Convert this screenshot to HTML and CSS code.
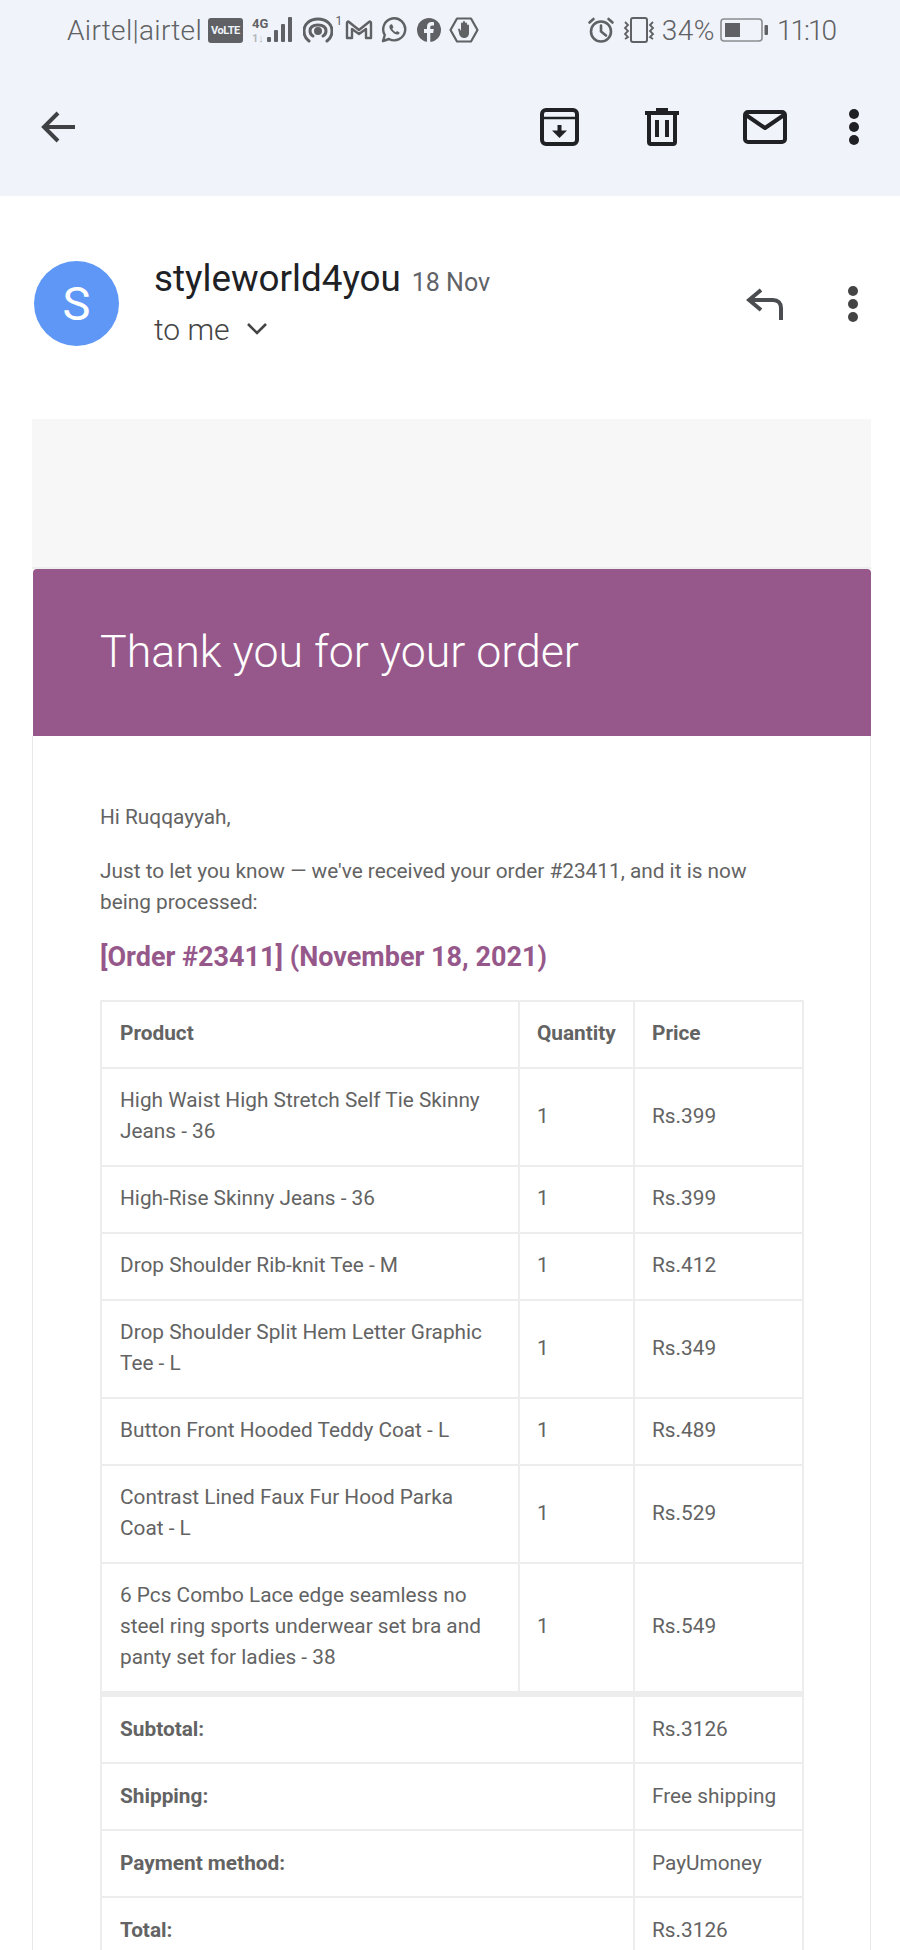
FILE: index.html
```html
<!DOCTYPE html>
<html lang="en">
<head>
<meta charset="utf-8">
<title>Thank you for your order</title>
<link rel="stylesheet" href="styles.css">
</head>
<body>
<div class="screen">
  <header class="topbar">
    <div class="status">
      <div class="status-left">
        <span class="carrier">Airtel|airtel</span>
        <span class="volte">VoLTE</span>
        <span class="net">
          <svg class="i-signal" viewBox="0 0 40 26" width="40" height="26">
            <text x="0" y="11" class="net-4g">4G</text>
            <text x="0" y="25" class="net-1">1↓</text>
            <g fill="#5f6164"><rect x="15" y="20" width="4" height="5" rx="1"/><rect x="22" y="13" width="4" height="12" rx="1"/><rect x="29" y="7" width="4" height="18" rx="1"/><rect x="36" y="0" width="4" height="25" rx="1"/></g>
          </svg>
        </span>
        <svg class="i-hot" viewBox="0 0 30 26" width="30" height="26" fill="none" stroke="#5f6164" stroke-width="3" stroke-linecap="round"><path d="M6 24C2 21 1 17 1 14 1 7 7 2 15 2s14 5 14 12c0 3-1 7-5 10"/><path d="M10 19c-2-1-3-3-3-5 0-4 3-6 8-6s8 2 8 6c0 2-1 4-3 5"/><circle cx="15" cy="14" r="2.5" fill="#5f6164"/></svg>
        <span class="sup">1</span>
        <svg class="i-m" viewBox="0 0 28 20" width="28" height="20" fill="none" stroke="#5f6164" stroke-width="2.4" stroke-linejoin="round"><path d="M2 18V3c0-1 1-2 2-1l10 8 10-8c1-1 2 0 2 1v15h-5V9l-7 5-7-5v9z"/></svg>
        <svg class="i-wa" viewBox="0 0 26 26" width="26" height="26" fill="none" stroke="#5f6164" stroke-width="2.4"><path d="M2 24l1.8-6A11 11 0 1 1 8 22z" stroke-linejoin="round"/><path d="M9 8c-1 1-1 3 1 5.5S15 18 17 17.500c1-.3 2-1.500 1.500-2l-2.500-1.500-1.200 1.200c-1.500-.5-3-2.200-3.500-3.700l1.200-1-1.200-2.800c-.5-.6-1.500-.4-2.300.3z" fill="#5f6164" stroke="none"/></svg>
        <svg class="i-fb" viewBox="0 0 24 24" width="24" height="24"><circle cx="12" cy="12" r="12" fill="#5f6164"/><path d="M10 24v-9H7v-4h3V8.500C10 5.500 12 4 14.500 4c1.200 0 2.300.2 2.500.2v3.300h-1.800c-1.500 0-1.900.8-1.900 1.800V11h3.500l-.6 4h-2.900v9z" fill="#f0f4fa"/></svg>
        <svg class="i-hand" viewBox="0 0 30 26" width="30" height="26"><path d="M8 1.500h14l6.500 11.500L22 24.500H8L1.500 13z" fill="none" stroke="#5f6164" stroke-width="2.200" stroke-linejoin="round"/><path d="M9 12l1.500-.5L12 14V6.500a1 1 0 0 1 2 0V5a1 1 0 0 1 2 0v1.500a1 1 0 0 1 2 0v2a1 1 0 0 1 2 0V16c0 3-2 5-5 5-2 0-3.500-1-4.500-3z" fill="#5f6164"/></svg>
      </div>
      <div class="status-right">
        <svg class="i-alarm" viewBox="0 0 28 26" width="28" height="26" fill="none" stroke="#5f6164" stroke-width="2.600" stroke-linecap="round"><circle cx="14" cy="14.500" r="10"/><path d="M14 8.500v6l5 4M2.500 5.500L6.500 2M25.500 5.500L21.500 2"/></svg>
        <svg class="i-vib" viewBox="0 0 34 26" width="34" height="26" fill="none" stroke="#5f6164" stroke-width="2"><rect x="9" y="1" width="16" height="24" rx="2"/><path d="M3 5l3 3-3 3 3 3-3 3 3 3-3 2M31 5l-3 3 3 3-3 3 3 3-3 3 3 2" stroke-width="1.800"/></svg>
        <span class="pct">34%</span>
        <svg class="i-bat" viewBox="0 0 48 24" width="48" height="24"><rect x="1" y="1" width="41" height="22" rx="3" fill="none" stroke="#8b8d90" stroke-width="1.600"/><rect x="5" y="5" width="15" height="14" fill="#5f6164"/><rect x="44.500" y="7" width="3.500" height="10" rx="1" fill="#5f6164"/></svg>
        <span class="clock">11:10</span>
      </div>
    </div>
    <div class="appbar">
      <svg class="i-back" viewBox="0 0 34 32" width="34" height="32" fill="none" stroke="#3f4144" stroke-width="4"><path d="M34 16H3M17 2L3 16l14 14"/></svg>
      <div class="actions">
        <svg class="i-archive" viewBox="0 0 39 38" width="39" height="38" fill="none" stroke="#202124" stroke-width="4" stroke-linejoin="round"><rect x="2" y="2" width="35" height="34" rx="4"/><path d="M2 10h35" stroke-width="2.500"/><path d="M19.500 17v7" stroke-width="4"/><path d="M12 22.500h15L19.500 30z" fill="#202124" stroke="none"/></svg>
        <svg class="i-trash" viewBox="0 0 34 38" width="34" height="38" fill="none" stroke="#202124" stroke-width="4"><path d="M0 5h34M11 1.500h12" /><path d="M4 6v28a2 2 0 0 0 2 2h22a2 2 0 0 0 2-2V6"/><path d="M12 12v17M22 12v17"/></svg>
        <svg class="i-mail" viewBox="0 0 44 34" width="44" height="34" fill="none" stroke="#202124" stroke-width="4" stroke-linejoin="round"><rect x="2" y="2" width="40" height="30" rx="3"/><path d="M3 5l19 13L41 5"/></svg>
        <svg class="i-dots" viewBox="0 0 12 38" width="12" height="38" fill="#202124"><circle cx="6" cy="6" r="5"/><circle cx="6" cy="19" r="5"/><circle cx="6" cy="32" r="5"/></svg>
      </div>
    </div>
  </header>

  <section class="sender">
    <div class="avatar">S</div>
    <div class="who">
      <div class="who-top"><span class="name">styleworld4you</span><span class="date">18 Nov</span></div>
      <div class="who-bottom"><span class="tome">to me</span>
        <svg class="i-chev" viewBox="0 0 20 12" width="20" height="12" fill="none" stroke="#444" stroke-width="2.600"><path d="M1 1l9 9 9-9"/></svg>
      </div>
    </div>
    <div class="sender-actions">
      <svg class="i-reply" viewBox="0 0 38 32" width="38" height="32" fill="none" stroke="#4a4c4f" stroke-width="4"><path d="M15 2L3 12l12 10"/><path d="M3 12h24c5 0 8 3 8 8v12"/></svg>
      <svg class="i-dots2" viewBox="0 0 12 38" width="12" height="38" fill="#444"><circle cx="6" cy="6" r="5"/><circle cx="6" cy="19" r="5"/><circle cx="6" cy="32" r="5"/></svg>
    </div>
  </section>

  <main class="card">
    <div class="card-top"></div>
    <div class="banner"><h1>Thank you for your order</h1></div>
    <div class="content">
      <p class="hi">Hi Ruqqayyah,</p>
      <p class="intro">Just to let you know — we've received your order #23411, and it is now being processed:</p>
      <h2>[Order #23411] (November 18, 2021)</h2>
      <table class="order">
        <colgroup><col class="c1"><col class="c2"><col class="c3"></colgroup>
        <thead>
          <tr><th>Product</th><th>Quantity</th><th>Price</th></tr>
        </thead>
        <tbody>
          <tr><td>High Waist High Stretch Self Tie Skinny Jeans - 36</td><td>1</td><td>Rs.399</td></tr>
          <tr><td>High-Rise Skinny Jeans - 36</td><td>1</td><td>Rs.399</td></tr>
          <tr><td>Drop Shoulder Rib-knit Tee - M</td><td>1</td><td>Rs.412</td></tr>
          <tr><td>Drop Shoulder Split Hem Letter Graphic Tee - L</td><td>1</td><td>Rs.349</td></tr>
          <tr><td>Button Front Hooded Teddy Coat - L</td><td>1</td><td>Rs.489</td></tr>
          <tr><td>Contrast Lined Faux Fur Hood Parka Coat - L</td><td>1</td><td>Rs.529</td></tr>
          <tr><td>6 Pcs Combo Lace edge seamless no steel ring sports underwear set bra and panty set for ladies - 38</td><td>1</td><td>Rs.549</td></tr>
        </tbody>
        <tfoot>
          <tr class="first"><th colspan="2">Subtotal:</th><td>Rs.3126</td></tr>
          <tr><th colspan="2">Shipping:</th><td>Free shipping</td></tr>
          <tr><th colspan="2">Payment method:</th><td>PayUmoney</td></tr>
          <tr><th colspan="2">Total:</th><td>Rs.3126</td></tr>
        </tfoot>
      </table>
    </div>
  </main>
</div>
</body>
</html>
```

FILE: styles.css
```css
* { box-sizing: border-box; }
html, body { margin: 0; padding: 0; background: #fff; }
body { font-family: Roboto, "Liberation Sans", sans-serif; color: #636363; }
.screen { width: 900px; height: 1950px; overflow: hidden; background: #fff; }

.topbar { height: 196px; background: #f0f4fa; }
.status { height: 60px; display: flex; justify-content: space-between; align-items: center; padding: 0 65px 0 67px; color: #5f6164; }
.status-left, .status-right { display: flex; align-items: center; }
.carrier { font-size: 28px; font-weight: 300; letter-spacing: 0.3px; margin-right: 6px; white-space: nowrap; }
.volte { flex: none; display: flex; align-items: center; justify-content: center; padding: 0 3px; height: 25px; background: #5f6164; color: #f0f4fa; border-radius: 3px; font-size: 11px; font-weight: 700; letter-spacing: -0.4px; }
.net { margin-left: 9px; display: flex; }
.net-4g { font: 700 13px Roboto, sans-serif; fill: #5f6164; }
.net-1 { font: 700 11px Roboto, sans-serif; fill: #b4b7bb; }
.i-hot { margin-left: 11px; }
.sup { font-size: 12px; width: 12px; text-align: center; margin-top: -18px; }
.i-wa { margin-left: 8px; }
.i-fb { margin-left: 10px; }
.i-hand { margin-left: 8px; }
.i-vib { margin-left: 7px; }
.pct { font-size: 28px; font-weight: 300; margin-left: 6px; letter-spacing: 0.5px; }
.i-bat { margin-left: 5px; }
.clock { font-size: 28px; font-weight: 300; margin-left: 9px; letter-spacing: -2px; }

.appbar { height: 134px; display: flex; justify-content: space-between; align-items: center; padding: 0 41px; }
.actions { display: flex; align-items: center; margin-right: -1px; }
.i-trash { margin-left: 66px; }
.i-mail { margin-left: 64px; }
.i-dots { margin-left: 61px; }

.sender { height: 223px; display: flex; align-items: flex-start; padding: 65px 41px 0 34px; }
.avatar { width: 85px; height: 85px; border-radius: 50%; background: #5e97f6; color: #fff; font-size: 47px; font-weight: 400; line-height: 85px; text-align: center; flex: none; }
.who { margin-left: 35px; }
.who-top { display: flex; align-items: baseline; height: 38px; margin-top: -1px; }
.name { font-size: 36.800px; font-weight: 400; color: #202124; line-height: 38px; }
.date { font-size: 25px; color: #5f6368; margin-left: 11px; }
.who-bottom { display: flex; align-items: center; margin-top: 13px; height: 36px; }
.tome { font-size: 30px; font-weight: 300; color: #444; }
.i-chev { margin-left: 17px; }
.sender-actions { margin-left: auto; display: flex; align-items: center; height: 85px; }
.i-dots2 { margin-left: 63px; }

.card { margin: 0 29px 0 32px; }
.card-top { height: 150px; background: #f7f7f7; border-bottom: 2px solid #eeeeee; }
.banner { height: 167px; background: #96588a; border-radius: 4px 4px 0 0; display: flex; align-items: center; padding-left: 67px; margin-left: 1px; }
h1 { margin: 0 0 1px; font-size: 44.700px; font-weight: 300; color: #fff; }
.content { border: solid #e8e8e8; border-width: 0 1px; padding: 66px 65px 0 67px; font-size: 20.800px; line-height: 31px; }
p { margin: 0; }
.intro { margin-top: 23px; padding-right: 30px; }
h2 { margin: 20px 0 24px; font-size: 27px; line-height: 38px; font-weight: 700; color: #96588a; }
.order { width: 702px; table-layout: fixed; border-collapse: collapse; font-size: 20.800px; line-height: 31px; color: #636363; }
.c1 { width: 418px; }
.c2 { width: 115px; }
.c3 { width: 169px; }
.order th, .order td { border: 2px solid #ededed; padding: 16px 17px 18px; text-align: left; vertical-align: middle; }
.order th { font-weight: 700; }
.order td:first-child, .order th:first-child { padding-left: 18px; }
.order td:last-child { white-space: nowrap; padding-right: 0; }
.order tfoot th, .order tfoot td { padding-top: 17px; padding-bottom: 17px; }
.order tfoot .first th, .order tfoot .first td { border-top: 6px solid #ededed; }
```
